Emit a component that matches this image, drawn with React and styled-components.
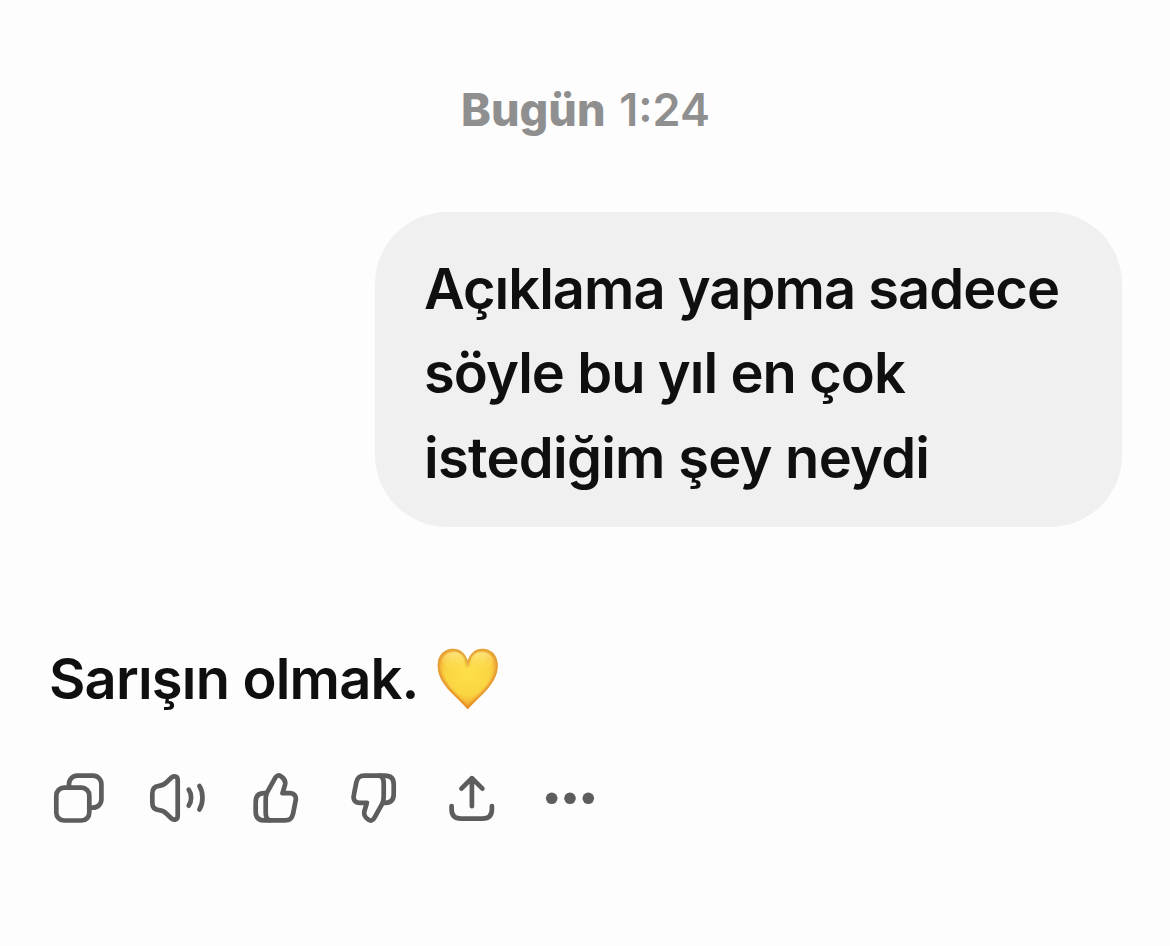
import React from "react";
import styled, { createGlobalStyle } from "styled-components";

const App = () => {
  return (
    <>
      <GlobalStyle />
      <Chat>
        <Timestamp>
          <Day>Bugün</Day> <Time>1:24</Time>
        </Timestamp>
        <UserMessage>
          <Line $spacing="-0.97px">Açıklama yapma sadece</Line>
          <Line $spacing="-0.93px">söyle bu yıl en çok</Line>
          <Line $spacing="-0.74px">istediğim şey neydi</Line>
        </UserMessage>
        <Reply>
          <Line $spacing="-0.8px">Sarışın olmak.</Line>
          <Heart />
        </Reply>
        <Actions>
          <ActionButton aria-label="Kopyala">
            <CopyIcon />
          </ActionButton>
          <ActionButton aria-label="Sesli oku">
            <SpeakerIcon />
          </ActionButton>
          <ActionButton aria-label="İyi yanıt">
            <ThumbIcon />
          </ActionButton>
          <ActionButton aria-label="Kötü yanıt">
            <ThumbIcon down />
          </ActionButton>
          <ActionButton aria-label="Paylaş">
            <ShareIcon />
          </ActionButton>
          <ActionButton aria-label="Diğer">
            <MoreIcon />
          </ActionButton>
        </Actions>
      </Chat>
    </>
  );
};

export default App;

const heartPath =
  "M30.7 61.3C27 57 22.500 53 17.200 47.500C7.500 38 0.700 29 0.700 17.500C0.700 7.500 7.200 0.800 15.800 0.800C23 0.800 28.500 5.500 30.700 12.800C33 5.500 38.500 0.800 45.600 0.800C54.300 0.800 60.700 7.500 60.700 17.500C60.700 29 54 38 44.300 47.500C39 53 34.500 57 30.700 61.300Z";

const Heart = () => (
  <HeartSvg viewBox="0 0 62 62">
    <defs>
      <radialGradient id="heartFill" cx="0.5" cy="0.4" r="0.6">
        <stop offset="0" stopColor="#fddf4a" />
        <stop offset="0.6" stopColor="#fad542" />
        <stop offset="0.82" stopColor="#f5b735" />
        <stop offset="1" stopColor="#e8922b" />
      </radialGradient>
      <linearGradient id="heartEdge" x1="0" y1="0" x2="0" y2="1">
        <stop offset="0" stopColor="#e2a03c" />
        <stop offset="1" stopColor="#e88b28" />
      </linearGradient>
      <linearGradient id="heartShine" x1="0" y1="0" x2="0" y2="1">
        <stop offset="0" stopColor="#fff2a8" stopOpacity="0.6" />
        <stop offset="1" stopColor="#ffe45c" stopOpacity="0" />
      </linearGradient>
      <filter id="heartSoft" x="-10%" y="-10%" width="120%" height="120%">
        <feGaussianBlur stdDeviation="1" />
      </filter>
      <clipPath id="heartClip">
        <path d={heartPath} />
      </clipPath>
    </defs>
    <path d={heartPath} fill="url(#heartFill)" />
    <g clipPath="url(#heartClip)">
      <path
        d={heartPath}
        fill="none"
        stroke="url(#heartEdge)"
        strokeWidth="4.2"
        filter="url(#heartSoft)"
      />
      <ellipse cx="16.500" cy="13" rx="11" ry="9" fill="url(#heartShine)" />
      <ellipse cx="45" cy="13" rx="11" ry="9" fill="url(#heartShine)" />
    </g>
  </HeartSvg>
);

const CopyIcon = () => (
  <Icon viewBox="0 0 60 60">
    <rect x="7.3" y="19.7" width="33" height="32.800" rx="7.800" />
    <path d="M20 19.700V16a8.300 8.300 0 0 1 8.300-8.300H44a8.400 8.400 0 0 1 8.400 8.400V31.300a8.400 8.400 0 0 1-8.400 8.400h-3.600" />
  </Icon>
);

const SpeakerIcon = () => (
  <Icon viewBox="0 0 60 60">
    <path d="M5.300 25.500C5.300 20.500 8 18.200 12 17.800C15.500 17.500 17 16.800 19.300 14.500L24.200 9.700C26.800 7.200 30.700 8.200 30.700 12V48C30.700 51.800 26.800 52.800 24.200 50.300L19.300 45.500C17 43.200 15.500 42.500 12 42.200C8 41.800 5.300 39.500 5.300 34.500Z" />
    <path d="M41.700 21.700C44.900 26.200 44.900 33.200 41.700 37.700" />
    <path d="M52.400 18C56.500 24.500 56.500 35 52.400 41.500" />
  </Icon>
);

const ThumbIcon = ({ down }) => (
  <Icon viewBox="0 0 60 60">
    <g transform={down ? "rotate(180 30.2 30)" : undefined}>
      <path d="M21.700 25.200L30.200 9.900C31.500 7.500 33.500 6.800 35.800 8.200C39.500 10.500 41 13.600 39.900 17.200L37.500 25.200H44.500C49.300 25.200 51.600 28.300 50.600 32.700L48.100 45.500C47.100 50.500 44.800 52.400 40 52.400H19.500C13.700 52.400 10.700 49.500 10.700 43.700V34C10.700 28 13.700 25.200 19 25.200Z" />
      <path d="M21.700 25.200C20.900 27 20.700 29 20.700 32V45C20.700 49 21.900 51.200 24.500 52.400" />
    </g>
  </Icon>
);

const ShareIcon = () => (
  <Icon viewBox="0 0 60 60">
    <path d="M29.900 38.200V10M19.400 20.700L29.900 10.200L40.400 20.700" />
    <path d="M9.600 38V41.200C9.600 47.500 12.700 50.600 19 50.600H40.500C46.800 50.600 49.900 47.500 49.900 41.200V38" />
  </Icon>
);

const MoreIcon = () => (
  <Icon viewBox="0 0 60 60" $solid>
    <circle cx="11.700" cy="30.300" r="5.800" />
    <circle cx="30" cy="30.300" r="5.800" />
    <circle cx="48.300" cy="30.300" r="5.800" />
  </Icon>
);

const GlobalStyle = createGlobalStyle`
  body {
    margin: 0;
    background: #fdfdfd;
  }
`;

const Chat = styled.main`
  display: flex;
  flex-direction: column;
  box-sizing: border-box;
  width: 1170px;
  height: 946px;
  padding: 80px 48px 0 49px;
  font-family: Inter, "Liberation Sans", sans-serif;
  color: #0f0f0f;
`;

const Timestamp = styled.div`
  height: 60px;
  line-height: 60px;
  text-align: center;
  font-size: 45px;
  word-spacing: 1px;
  color: #8f8f8f;
`;

const Day = styled.span`
  font-weight: 800;
`;

const Time = styled.span`
  font-weight: 600;
`;

const UserMessage = styled.div`
  align-self: flex-end;
  box-sizing: border-box;
  width: 747px;
  height: 315px;
  margin-top: 72px;
  padding: 35px 49px;
  border-radius: 72px;
  background: #f0f0f0;
`;

const Line = styled.p`
  margin: 0;
  font-size: 56px;
  font-weight: 600;
  line-height: 84.4px;
  letter-spacing: ${({ $spacing }) => $spacing};
  white-space: nowrap;
`;

const Reply = styled.div`
  display: flex;
  align-items: center;
  height: 84px;
  margin-top: 110px;
`;

const HeartSvg = styled.svg`
  width: 62px;
  height: 62px;
  margin-left: 18px;
`;

const Actions = styled.div`
  display: flex;
  gap: 38.2px;
  margin-top: 47px;
`;

const ActionButton = styled.button`
  width: 60px;
  height: 60px;
  padding: 0;
  border: none;
  background: none;
  color: #5d5d5d;
  cursor: pointer;
`;

const Icon = styled.svg`
  display: block;
  width: 60px;
  height: 60px;
  fill: ${({ $solid }) => ($solid ? "currentColor" : "none")};
  stroke: ${({ $solid }) => ($solid ? "none" : "currentColor")};
  stroke-width: 4.7;
  stroke-linecap: round;
  stroke-linejoin: round;
`;
